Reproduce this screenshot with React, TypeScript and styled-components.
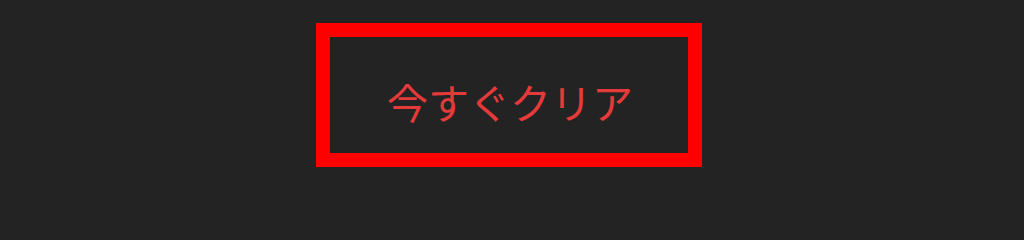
import React from "react";
import styled, { createGlobalStyle } from "styled-components";

const Global = createGlobalStyle`
  html, body {
    margin: 0;
    padding: 0;
    background: #232323;
  }
  body {
    width: 1024px;
    height: 202px;
    overflow: hidden;
    font-family: "Noto Sans CJK JP", "Noto Sans", sans-serif;
  }
`;

const Stage = styled.div`
  display: flex;
  align-items: flex-start;
  justify-content: flex-start;
  box-sizing: border-box;
  width: 1024px;
  height: 202px;
  padding: 23px 0 0 316px;
  background: #232323;
`;

const ClearButton = styled.button`
  box-sizing: border-box;
  width: 386px;
  height: 144px;
  border: 14px solid #ff0000;
  background: transparent;
  display: flex;
  align-items: center;
  justify-content: center;
  padding: 13px 0 0 2px;
  margin: 0;
  color: #e53a3a;
  font-family: "Noto Sans CJK JP", "Noto Sans", sans-serif;
  font-size: 41px;
  line-height: 1;
  cursor: pointer;
`;

export default function App() {
  return (
    <>
      <Global />
      <Stage>
        <ClearButton>今すぐクリア</ClearButton>
      </Stage>
    </>
  );
}
